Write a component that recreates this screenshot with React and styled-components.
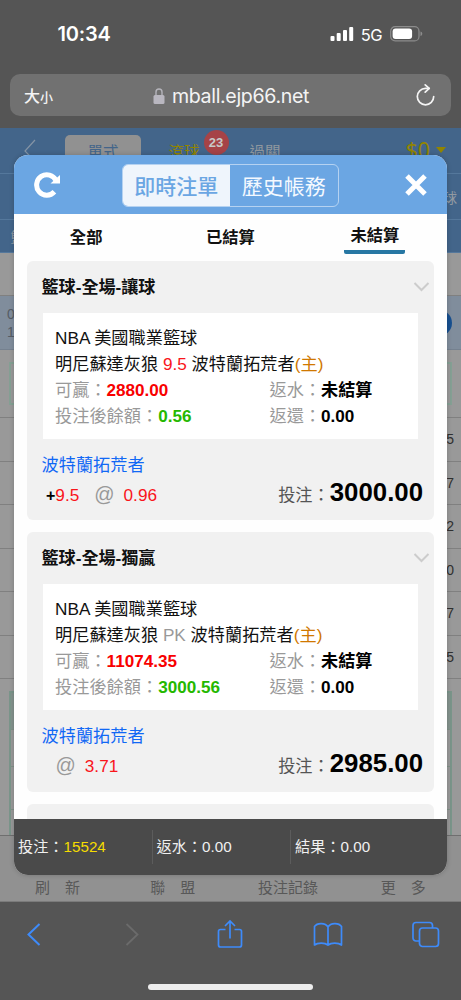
import styled, { createGlobalStyle } from 'styled-components'

const GlobalStyle = createGlobalStyle`
  * {
    box-sizing: border-box;
  }
  body {
    margin: 0;
    background: #555555;
    font-family: "Liberation Sans", "Noto Sans CJK TC", sans-serif;
  }
`

const Phone = styled.div`
  display: flex;
  flex-direction: column;
  width: 461px;
  height: 1000px;
  overflow: hidden;
  background: #555555;
`

const StatusBar = styled.header`
  display: flex;
  justify-content: space-between;
  align-items: center;
  height: 74px;
  padding: 0 38px 6px 57.5px;
  color: #fff;
  font-family: Inter, sans-serif;
`

const Time = styled.span`
  font-size: 20px;
  font-weight: 600;
  letter-spacing: -0.2px;
`

const StatusIcons = styled.div`
  display: flex;
  align-items: center;
`

const Network = styled.span`
  margin: 1px 8px 0 7px;
  font-size: 16.5px;
  letter-spacing: -0.6px;
`

const AddressBar = styled.div`
  display: flex;
  align-items: center;
  justify-content: space-between;
  flex: none;
  height: 42px;
  margin: 0 10px 12px;
  padding: 0 16px 0 14px;
  border-radius: 10px;
  background: #717171;
  color: #f4f4f4;
`

const TextSize = styled.span`
  width: 22px;
  font-size: 16px;
  font-weight: 500;
  white-space: nowrap;
  small {
    font-size: 13px;
  }
`

const Url = styled.div`
  display: flex;
  align-items: center;
  gap: 7px;
  padding-top: 1px;
  font-family: Inter, sans-serif;
  font-size: 19.6px;
  letter-spacing: -0.35px;
`

const Page = styled.main`
  position: relative;
  display: flex;
  flex-direction: column;
  flex: none;
  height: 774px;
  background: #999999;
`

const TopNav = styled.nav`
  display: flex;
  height: 46px;
  padding: 7px 15px 0 24px;
  background: #43658a;
  border-bottom: 1px solid #55789c;
  color: #8f979e;
  font-size: 15.5px;
  line-height: 35px;
`

const NavTab = styled.span`
  width: ${({ $width }) => $width}px;
  text-align: center;
  border-radius: 5px;
  background: ${({ $active }) => ($active ? '#919191' : 'transparent')};
  color: ${({ $color }) => $color || 'inherit'};
`

const NavBack = styled.span`
  width: 41px;
`

const LiveTab = styled.span`
  position: relative;
  width: 86px;
  text-align: center;
  color: #918400;
`

const Badge = styled.span`
  position: absolute;
  top: -5px;
  left: 62.5px;
  width: 25px;
  height: 25px;
  border-radius: 50%;
  background: #a64347;
  color: #c8c8c8;
  font-size: 13px;
  font-weight: bold;
  line-height: 25px;
`

const Balance = styled.span`
  display: flex;
  align-items: center;
  gap: 6px;
  height: 29px;
  margin-left: auto;
  color: #918400;
  font-family: "Noto Sans", sans-serif;
  font-size: 21.5px;
`

const SubNav = styled.div`
  display: flex;
  justify-content: ${({ $end }) => ($end ? 'flex-end' : 'flex-start')};
  align-items: center;
  height: ${({ $height }) => $height}px;
  padding: 0 4px 0 10.5px;
  background: #43658a;
  border-bottom: 1px solid #55789c;
  color: #929aa2;
  font-size: 14px;
`

const Spacer = styled.div`
  height: ${({ $height }) => $height}px;
  border-bottom: 1px solid #808080;
`

const GameRow = styled.div`
  display: flex;
  justify-content: space-between;
  align-items: center;
  height: 54px;
  padding: 0 9px 0 7px;
  background: #808d9c;
  border-bottom: 1px solid #75818f;
  color: #555c64;
  font-size: 14px;
  line-height: 18px;
`

const RoundButton = styled.span`
  width: 26px;
  height: 26px;
  border-radius: 50%;
  background: #175090;
  color: #b8c8d8;
  text-align: center;
  font-size: 18px;
  line-height: 24px;
`

const BoxRow = styled.div`
  height: 68px;
  padding: 12px 9px;
  border-bottom: 1px solid #808080;
`

const GreenBox = styled.div`
  height: 43px;
  border: 2px solid #85a094;
`

const OddsRow = styled.div`
  display: flex;
  justify-content: flex-end;
  align-items: center;
  height: 43.5px;
  padding-right: 7px;
  border-bottom: 1px solid #808080;
  color: #303030;
  font-size: 14px;
`

const GreenTable = styled.div`
  flex: 1;
  margin: 12px 9px 0;
  border: 2px solid #7a958a;
  border-bottom: 0;
`

const GreenCell = styled.div`
  height: ${({ $height }) => $height}px;
  background: ${({ $head }) => ($head ? '#84938d' : 'transparent')};
  border-bottom: 1px solid #819188;
`

const BottomNav = styled.nav`
  display: grid;
  grid-template-columns: repeat(4, 1fr);
  align-items: end;
  flex: none;
  height: 67px;
  padding-bottom: 4px;
  background: #919191;
  border-top: 1px solid #6f6f6f;
  border-bottom: 1px solid #7b7b7b;
  color: #585858;
  font-size: 15px;
  text-align: center;
`

const Modal = styled.section`
  position: absolute;
  top: 27px;
  left: 14px;
  display: flex;
  flex-direction: column;
  width: 433px;
  height: 720px;
  overflow: hidden;
  border-radius: 14px;
  background: #fefefe;
  box-shadow: 0 0 5px rgba(0, 0, 0, 0.2);
`

const ModalHeader = styled.div`
  display: flex;
  justify-content: space-between;
  align-items: center;
  flex: none;
  height: 59px;
  padding: 0 20px 0 20px;
  background: #6ba6e3;
`

const Switch = styled.div`
  display: flex;
  width: 217px;
  height: 43px;
  margin: 2px 6px 0 0;
  overflow: hidden;
  border: 1px solid #b5d2f1;
  border-radius: 6px;
`

const SwitchItem = styled.span`
  flex: 1;
  text-align: center;
  font-size: 21px;
  font-weight: ${({ $active }) => ($active ? 500 : 400)};
  line-height: 44px;
  color: ${({ $active }) => ($active ? '#6ba6e3' : '#f4f9ff')};
  background: ${({ $active }) => ($active ? '#eff5fc' : 'transparent')};
`

const Tabs = styled.div`
  display: grid;
  grid-template-columns: repeat(3, 1fr);
  justify-items: center;
  align-items: start;
  flex: none;
  height: 47px;
`

const Tab = styled.span`
  width: 61px;
  height: ${({ $active }) => ($active ? 40 : 44)}px;
  padding-top: ${({ $active }) => ($active ? 0 : 2)}px;
  border-bottom: ${({ $active }) => ($active ? '4px solid #2777a3' : '0')};
  border-radius: 2px;
  text-align: center;
  font-size: 16.3px;
  font-weight: 700;
  line-height: 43.5px;
  color: #111;
`

const BetList = styled.div`
  display: flex;
  flex-direction: column;
  gap: 12px;
  flex: 1;
  min-height: 0;
  overflow: hidden;
  padding: 0 13px;
`

const BetCard = styled.article`
  flex: none;
  height: 259.3px;
  padding: 0 11px 0 14.5px;
  border-radius: 6px;
  background: #f1f1f1;
  font-size: 17.2px;
`

const CardTitle = styled.h2`
  display: flex;
  justify-content: space-between;
  align-items: center;
  height: 52px;
  margin: 0 -7px 0 0;
  padding-bottom: 3px;
  font-size: 17.1px;
  font-weight: 700;
  color: #111;
  svg {
    margin-top: 3px;
  }
`

const Details = styled.div`
  display: grid;
  grid-template-columns: 214.5px 1fr;
  grid-auto-rows: 26px;
  width: 375px;
  height: 126px;
  margin-left: 1.5px;
  padding: 12px 0 10px 12px;
  background: #fff;
  color: #111;
  line-height: 26px;
  white-space: nowrap;
`

const Wide = styled.div`
  grid-column: 1 / 3;
`

const Field = styled.div`
  color: #999;
  b {
    color: ${({ $color }) => $color || '#000'};
    font-size: 17.1px;
  }
`

const Colored = styled.span`
  color: ${({ $color }) => $color};
`

const Pick = styled.div`
  height: 26px;
  margin-top: 13px;
  color: #1168f5;
  line-height: 26px;
`

const BetLine = styled.div`
  display: flex;
  justify-content: space-between;
  align-items: baseline;
  height: 36px;
  margin-top: -1.5px;
  padding-left: ${({ $indent }) => $indent}px;
  color: #f9151b;
  font-size: 17.2px;
  line-height: 30px;
`

const Plus = styled.b`
  color: #000;
  font-size: 16px;
`

const At = styled.span`
  margin: 0 9px 0 ${({ $left }) => $left}px;
  color: #999;
  font-size: 20px;
`

const Stake = styled.span`
  color: #555;
  b {
    color: #000;
    font-size: 25.8px;
  }
`

const Summary = styled.footer`
  display: flex;
  align-items: center;
  flex: none;
  height: 56px;
  background: #4a4a4a;
  color: #f0f0f0;
  font-size: 15.2px;
`

const SummaryItem = styled.div`
  width: 138.5px;
  height: 34px;
  padding-left: 4px;
  border-right: ${({ $last }) => ($last ? '0' : '1px solid #5c5c5c')};
  line-height: 33px;
`

const Toolbar = styled.div`
  display: flex;
  justify-content: space-between;
  padding: 17px 21px 0 20px;
`

const HomeIndicator = styled.div`
  width: 165px;
  height: 6px;
  margin: 35px 0 0 148px;
  border-radius: 3px;
  background: #ededed;
`

const bets = [
  {
    title: '籃球-全場-讓球',
    middle: '9.5',
    middleColor: '#f9151b',
    win: '2880.00',
    rest: '0.56',
    handicap: '9.5',
    odds: '0.96',
    stake: '3000.00',
  },
  {
    title: '籃球-全場-獨贏',
    middle: 'PK',
    middleColor: '#999',
    win: '11074.35',
    rest: '3000.56',
    odds: '3.71',
    stake: '2985.00',
  },
]

function Bet({ bet }) {
  return (
    <BetCard>
      <CardTitle>
        {bet.title}
        <svg width="18" height="12" viewBox="0 0 18 12" fill="none" stroke="#ccc" strokeWidth="2">
          <path d="M2.5 2l7 7 7-7" />
        </svg>
      </CardTitle>
      <Details>
        <Wide>NBA 美國職業籃球</Wide>
        <Wide>
          明尼蘇達灰狼 <Colored $color={bet.middleColor}>{bet.middle}</Colored> 波特蘭拓荒者
          <Colored $color="#d07800">(主)</Colored>
        </Wide>
        <Field $color="#f80000">可贏：<b>{bet.win}</b></Field>
        <Field>返水：<b>未結算</b></Field>
        <Field $color="#25b800">投注後餘額：<b>{bet.rest}</b></Field>
        <Field>返還：<b>0.00</b></Field>
      </Details>
      <Pick>波特蘭拓荒者</Pick>
      <BetLine $indent={bet.handicap ? 4.5 : 14}>
        <span>
          {bet.handicap && <><Plus>+</Plus>{bet.handicap}</>}
          <At $left={bet.handicap ? 15 : 0}>@</At>
          {bet.odds}
        </span>
        <Stake>投注：<b>{bet.stake}</b></Stake>
      </BetLine>
    </BetCard>
  )
}

function App() {
  return (
    <>
      <GlobalStyle />
      <Phone>
        <StatusBar>
          <Time>10:34</Time>
          <StatusIcons>
            <svg width="24" height="16" viewBox="0 0 24 16" fill="#fff">
              <rect x="0.5" y="10" width="4" height="5" rx="1" />
              <rect x="6.7" y="7" width="4" height="8" rx="1" />
              <rect x="13" y="4" width="4" height="11" rx="1" />
              <rect x="19.2" y="1" width="4" height="14" rx="1" />
            </svg>
            <Network>5G</Network>
            <svg width="33" height="16" viewBox="0 0 33 16">
              <rect x="0.7" y="0.7" width="28.3" height="14.2" rx="4.5" fill="none" stroke="#8c8c8c" strokeWidth="1.2" />
              <rect x="2.6" y="2.6" width="19.5" height="10.5" rx="3" fill="#fff" />
              <path d="M30.5 5.5q1.8 0.6 1.8 2.3t-1.8 2.3z" fill="#8c8c8c" />
            </svg>
          </StatusIcons>
        </StatusBar>
        <AddressBar>
          <TextSize>大<small>小</small></TextSize>
          <Url>
            <svg width="12" height="16" viewBox="0 0 12 16">
              <path d="M3 8V4a3 3 0 0 1 6 0v4" fill="none" stroke="#b5b4bb" strokeWidth="1.4" />
              <rect x="0.5" y="7" width="11" height="9" rx="1.5" fill="#b9b7c0" />
            </svg>
            mball.ejp66.net
          </Url>
          <svg width="19" height="23" viewBox="0 0 19 23" fill="none" stroke="#f4f4f4" strokeWidth="1.7" strokeLinecap="round" strokeLinejoin="round">
            <path d="M13 4.4H9.5A8.2 8.2 0 1 0 17.7 12.6" />
            <path d="M9.2 0.9L13.2 4.4 9.2 8.2" />
          </svg>
        </AddressBar>
        <Page>
          <TopNav>
            <NavBack>
              <svg width="12" height="22" viewBox="0 0 12 22" fill="none" stroke="#8494a5" strokeWidth="1.2">
                <path d="M11 4L1 15l10 10.5" />
              </svg>
            </NavBack>
            <NavTab $width={76} $active $color="#43658a">單式</NavTab>
            <LiveTab>滾球<Badge>23</Badge></LiveTab>
            <NavTab $width={76}>過關</NavTab>
            <Balance>
              $0
              <svg width="10" height="6" viewBox="0 0 10 6" fill="#918400">
                <path d="M0 0h10L5 6z" />
              </svg>
            </Balance>
          </TopNav>
          <SubNav $height={46} $end>球</SubNav>
          <SubNav $height={33}>籃</SubNav>
          <Spacer $height={43} />
          <GameRow>
            <span>0<br />1</span>
            <RoundButton>+</RoundButton>
          </GameRow>
          <BoxRow>
            <GreenBox />
          </BoxRow>
          {['5', '7', '2', '0', '7', '5'].map((digit, index) => (
            <OddsRow key={`Odds-${index}`}>{digit}</OddsRow>
          ))}
          <GreenTable>
            <GreenCell $height={37} $head />
            <GreenCell $height={37} />
            <GreenCell $height={43} />
          </GreenTable>
          <BottomNav>
            <span>刷　新</span>
            <span>聯　盟</span>
            <span>投注記錄</span>
            <span>更　多</span>
          </BottomNav>
          <Modal>
            <ModalHeader>
              <svg width="27" height="28" viewBox="0 0 27 28">
                <path d="M20.4 20.8A10.2 10.2 0 1 1 22 9.5" fill="none" stroke="#fff" strokeWidth="5" />
                <path d="M26 4V12.5H16.5z" fill="#fff" />
              </svg>
              <Switch>
                <SwitchItem $active>即時注單</SwitchItem>
                <SwitchItem>歷史帳務</SwitchItem>
              </Switch>
              <svg width="22" height="22" viewBox="0 0 22 22" fill="none" stroke="#fff" strokeWidth="5">
                <path d="M2 2l18 18M20 2L2 20" />
              </svg>
            </ModalHeader>
            <Tabs>
              <Tab>全部</Tab>
              <Tab>已結算</Tab>
              <Tab $active>未結算</Tab>
            </Tabs>
            <BetList>
              {bets.map((bet) => (
                <Bet key={bet.title} bet={bet} />
              ))}
              <BetCard />
            </BetList>
            <Summary>
              <SummaryItem>投注：<Colored $color="#f5dc00">15524</Colored></SummaryItem>
              <SummaryItem>返水：0.00</SummaryItem>
              <SummaryItem $last>結果：0.00</SummaryItem>
            </Summary>
          </Modal>
        </Page>
        <Toolbar>
          <svg width="28" height="30" viewBox="0 0 28 30" fill="none" stroke="#3e8bfa" strokeWidth="2">
            <path d="M19.5 5L8.5 15.5l11 10.5" />
          </svg>
          <svg width="28" height="30" viewBox="0 0 28 30" fill="none" stroke="#6b6b6b" strokeWidth="1.8">
            <path d="M8.5 5l11 10.5L8.5 26" />
          </svg>
          <svg width="28" height="30" viewBox="0 0 28 30" fill="none" stroke="#3e8bfa" strokeWidth="1.7">
            <path d="M10.5 10.5H5.5a2 2 0 0 0-2 2V26a2 2 0 0 0 2 2h19a2 2 0 0 0 2-2V12.5a2 2 0 0 0-2-2H19.5M15 19.5V2M10 7l5-5 5 5" />
          </svg>
          <svg width="30" height="30" viewBox="0 0 30 30" fill="none" stroke="#3e8bfa" strokeWidth="1.7" strokeLinejoin="round">
            <path d="M15 8C12.5 3.5 4 3.5 1.5 7.5V26C4.5 23.5 12 23.5 15 26 18 23.5 25.5 23.5 28.5 26V7.5C26 3.5 17.5 3.5 15 8zV26" />
          </svg>
          <svg width="28" height="30" viewBox="0 0 28 30" fill="none" stroke="#3e8bfa" strokeWidth="1.7">
            <rect x="7.5" y="9" width="19" height="18.5" rx="3" />
            <path d="M7.500 22H4a3 3 0 0 1-3-3V6.5a3 3 0 0 1 3-3H17.500a3 3 0 0 1 3 3V9" />
          </svg>
        </Toolbar>
        <HomeIndicator />
      </Phone>
    </>
  )
}

export default App
